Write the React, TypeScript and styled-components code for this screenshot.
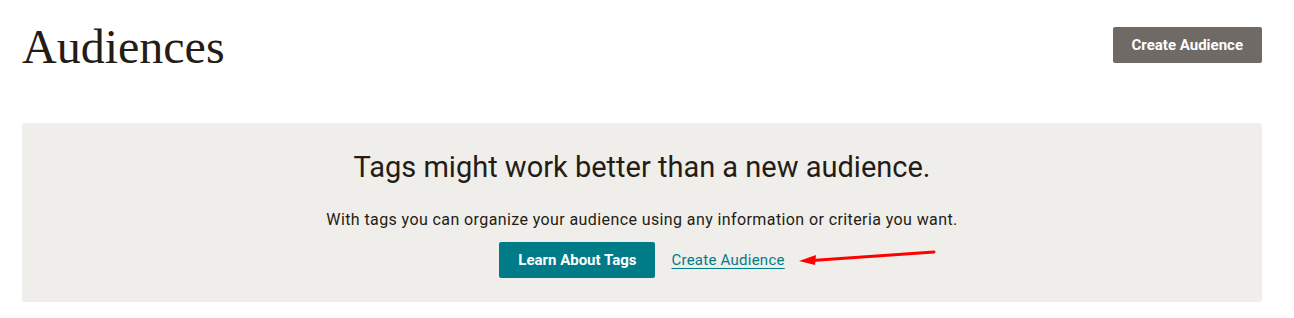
import React from 'react';
import styled, { createGlobalStyle } from 'styled-components';

const GlobalStyle = createGlobalStyle`
  html, body {
    margin: 0;
    padding: 0;
    background: #ffffff;
  }
  body {
    font-family: Roboto, "Liberation Sans", sans-serif;
    color: #241c15;
  }
`;

const Page = styled.div`
  padding: 18px 32px 0 22px;
  display: flex;
  flex-direction: column;
  gap: 47px;
`;

const Header = styled.header`
  display: flex;
  justify-content: space-between;
  align-items: flex-start;
`;

const Title = styled.h1`
  margin: 0;
  font-family: "Liberation Serif", "DejaVu Serif", serif;
  font-weight: 400;
  font-size: 48px;
  line-height: 58px;
  color: #241c15;
`;

const Button = styled.button<{ $variant: 'neutral' | 'primary' }>`
  height: 36px;
  padding: 0 19px;
  margin-top: ${({ $variant }) => ($variant === 'neutral' ? '9px' : '0')};
  border: none;
  border-radius: 2px;
  background: ${({ $variant }) => ($variant === 'neutral' ? '#6f6a66' : '#007c89')};
  color: #ffffff;
  font-family: Roboto, "Liberation Sans", sans-serif;
  font-weight: 700;
  font-size: 15px;
  cursor: pointer;
`;

const Panel = styled.section`
  position: relative;
  background: #efeeea;
  border-radius: 3px;
  padding: 26px 20px 24px;
  display: flex;
  flex-direction: column;
  align-items: center;
`;

const PanelTitle = styled.h2`
  margin: 0;
  font-weight: 400;
  font-size: 29px;
  line-height: 36px;
  color: #241c15;
`;

const PanelText = styled.p`
  margin: 25px 0 12px;
  font-size: 16px;
  line-height: 20px;
  letter-spacing: 0.4px;
  color: #241c15;
`;

const Actions = styled.div`
  display: flex;
  align-items: center;
  gap: 16px;
`;

const TextLink = styled.a`
  color: #007c89;
  font-size: 15px;
  letter-spacing: 0.25px;
  text-decoration: underline;
  text-underline-offset: 3px;
  cursor: pointer;
`;

const Arrow = styled.svg`
  position: absolute;
  left: 776px;
  top: 127px;
`;

export default function App() {
  return (
    <>
      <GlobalStyle />
      <Page>
        <Header>
          <Title>Audiences</Title>
          <Button $variant="neutral">Create Audience</Button>
        </Header>
        <Panel>
          <PanelTitle>Tags might work better than a new audience.</PanelTitle>
          <PanelText>
            With tags you can organize your audience using any information or criteria you want.
          </PanelText>
          <Actions>
            <Button $variant="primary">Learn About Tags</Button>
            <TextLink>Create Audience</TextLink>
          </Actions>
          <Arrow width="140" height="16" viewBox="0 0 140 16">
            <line x1="136" y1="2" x2="14" y2="10.5" stroke="#ff0000" strokeWidth="3" strokeLinecap="round" />
            <polygon points="1,11 18,5 17,15" fill="#ff0000" />
          </Arrow>
        </Panel>
      </Page>
    </>
  );
}
